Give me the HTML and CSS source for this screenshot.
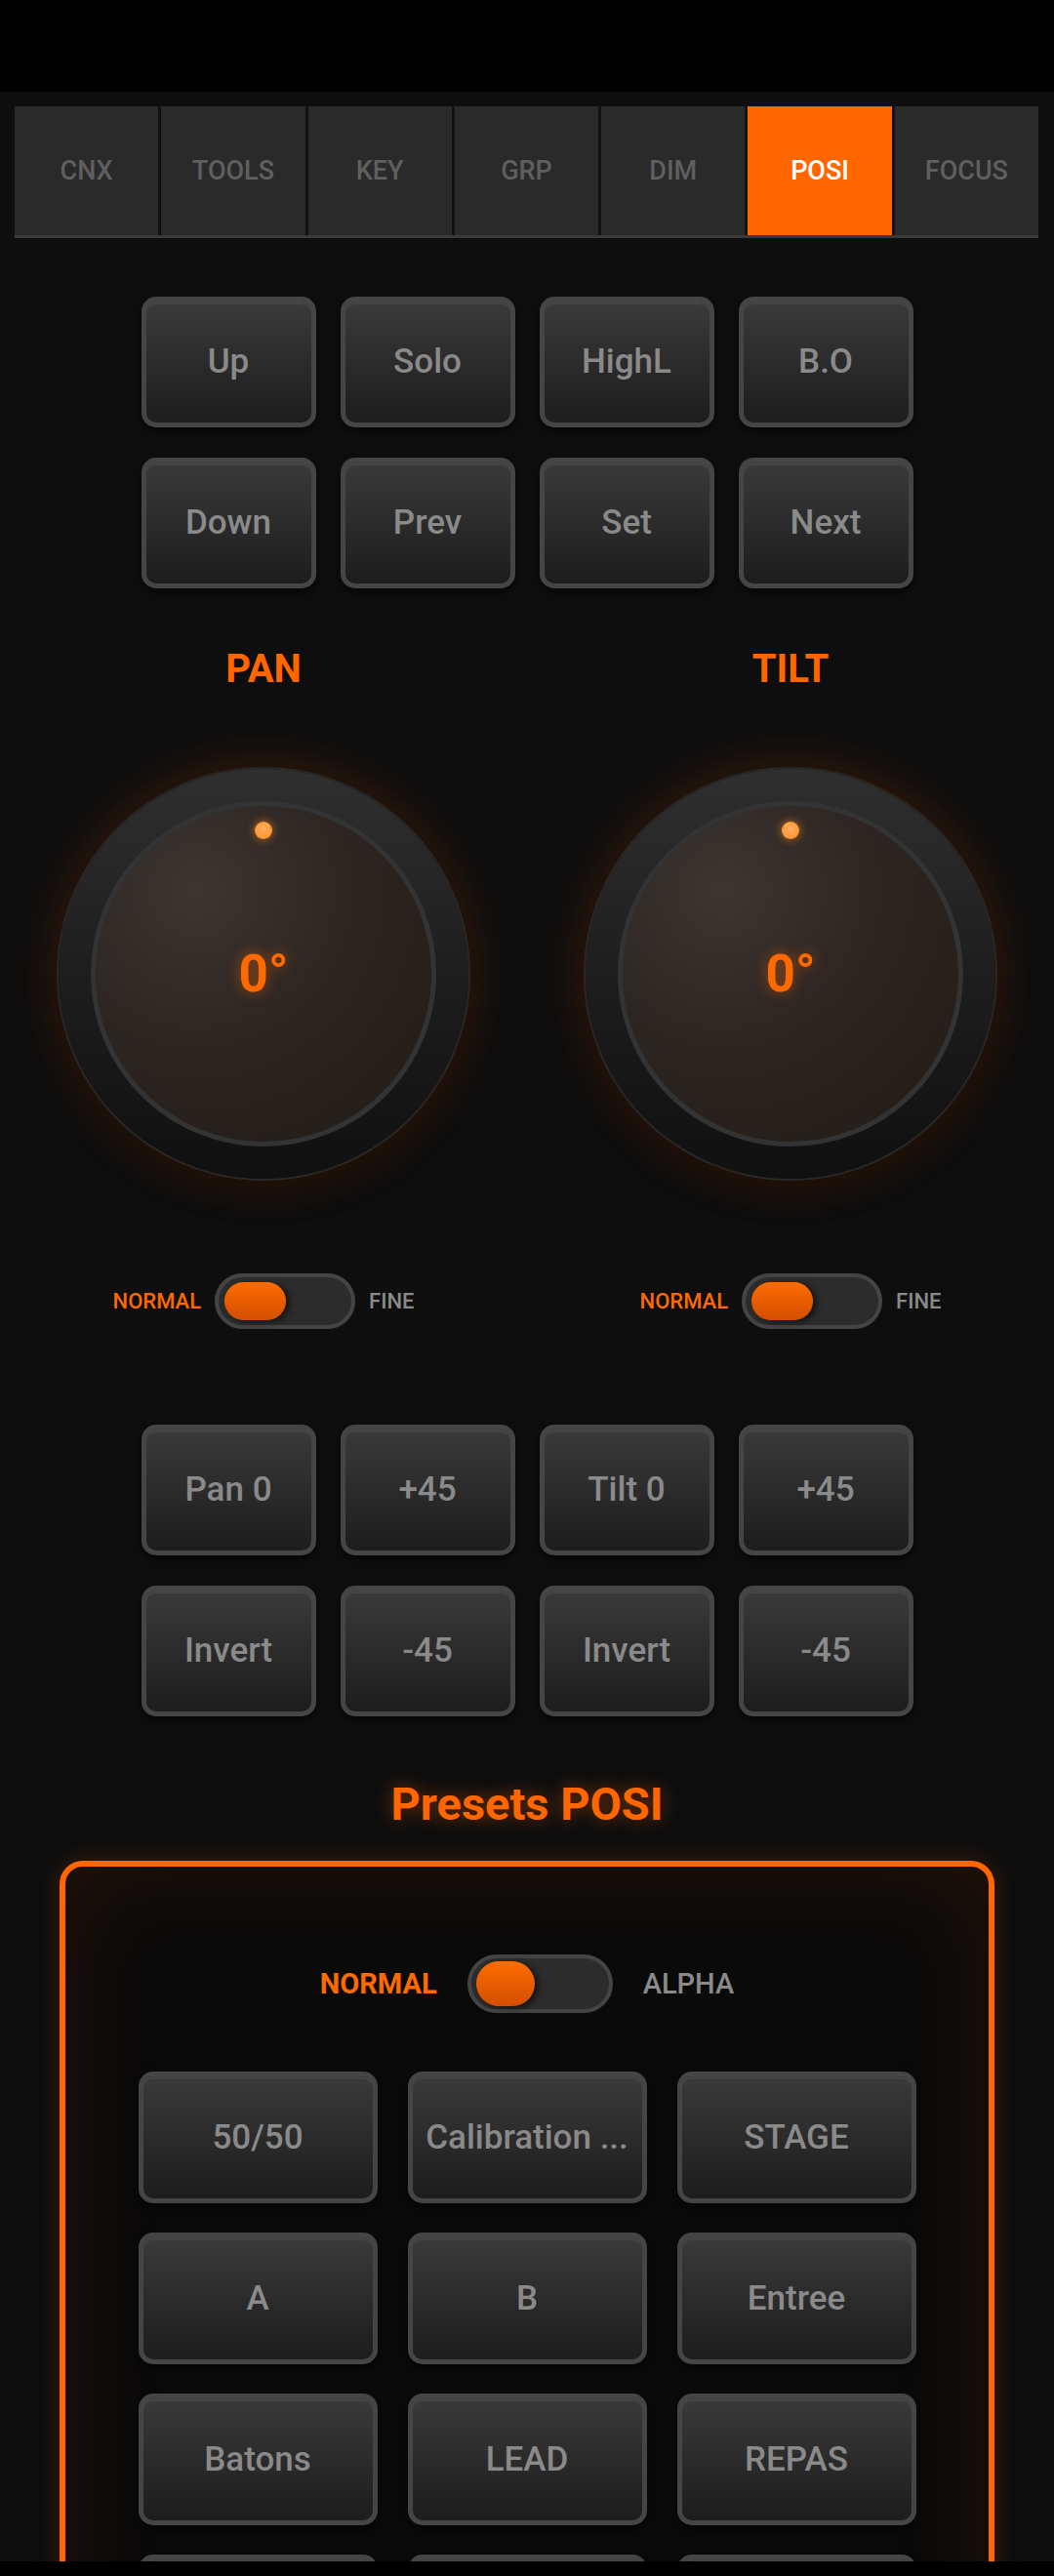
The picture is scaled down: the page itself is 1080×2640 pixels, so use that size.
FILE: index.html
```html
<!DOCTYPE html>
<html lang="fr">
<head>
    <meta charset="UTF-8">
    <meta name="viewport" content="width=device-width, initial-scale=1.0">
    <title>POSI</title>
    <link rel="stylesheet" href="styles.css">
</head>
<body>
    <div class="screen">
        <div class="status-bar"></div>

        <main class="content">
            <nav class="tabs">
                <div class="tab">CNX</div>
                <div class="tab">TOOLS</div>
                <div class="tab">KEY</div>
                <div class="tab">GRP</div>
                <div class="tab">DIM</div>
                <div class="tab tab-active">POSI</div>
                <div class="tab">FOCUS</div>
            </nav>

            <div class="pad-grid pad-top">
                <button class="btn">Up</button>
                <button class="btn">Solo</button>
                <button class="btn">HighL</button>
                <button class="btn">B.O</button>
                <button class="btn">Down</button>
                <button class="btn">Prev</button>
                <button class="btn">Set</button>
                <button class="btn">Next</button>
            </div>

            <div class="axes">
                <div class="axis">
                    <div class="axis-label">PAN</div>
                    <div class="knob">
                        <div class="knob-face">
                            <span class="knob-dot"></span>
                            <span class="knob-value">0°</span>
                        </div>
                    </div>
                    <div class="switch-row">
                        <span class="switch-on">NORMAL</span>
                        <span class="switch"><span class="switch-thumb"></span></span>
                        <span class="switch-off">FINE</span>
                    </div>
                </div>
                <div class="axis">
                    <div class="axis-label">TILT</div>
                    <div class="knob">
                        <div class="knob-face">
                            <span class="knob-dot"></span>
                            <span class="knob-value">0°</span>
                        </div>
                    </div>
                    <div class="switch-row">
                        <span class="switch-on">NORMAL</span>
                        <span class="switch"><span class="switch-thumb"></span></span>
                        <span class="switch-off">FINE</span>
                    </div>
                </div>
            </div>

            <div class="pad-grid pad-mid">
                <button class="btn">Pan 0</button>
                <button class="btn">+45</button>
                <button class="btn">Tilt 0</button>
                <button class="btn">+45</button>
                <button class="btn">Invert</button>
                <button class="btn">-45</button>
                <button class="btn">Invert</button>
                <button class="btn">-45</button>
            </div>

            <h2 class="presets-title">Presets POSI</h2>

            <section class="presets-panel">
                <div class="switch-row switch-row-lg">
                    <span class="switch-on">NORMAL</span>
                    <span class="switch switch-lg"><span class="switch-thumb"></span></span>
                    <span class="switch-off">ALPHA</span>
                </div>

                <div class="preset-grid">
                    <button class="btn">50/50</button>
                    <button class="btn">Calibration ...</button>
                    <button class="btn">STAGE</button>
                    <button class="btn">A</button>
                    <button class="btn">B</button>
                    <button class="btn">Entree</button>
                    <button class="btn">Batons</button>
                    <button class="btn">LEAD</button>
                    <button class="btn">REPAS</button>
                    <button class="btn"></button>
                    <button class="btn"></button>
                    <button class="btn"></button>
                </div>
            </section>
        </main>

        <div class="nav-bar"></div>
    </div>
</body>
</html>
```

FILE: styles.css
```css
body {
    margin: 0;
    padding: 0;
    background-color: #0e0e0e;
    font-family: Roboto, 'Noto Sans', sans-serif;
    color: #888;
}

.screen {
    height: 100vh;
    display: flex;
    flex-direction: column;
    overflow: hidden;
}

.status-bar {
    height: 94px;
    flex-shrink: 0;
    background-color: #000;
}

.nav-bar {
    height: 15px;
    flex-shrink: 0;
    background-color: #000;
}

.content {
    flex: 1;
    overflow-y: auto;
    scrollbar-width: none;
    padding-top: 15px;
}

.content::-webkit-scrollbar {
    display: none;
}

/* tabs */
.tabs {
    display: grid;
    grid-template-columns: repeat(7, 1fr);
    gap: 3px;
    margin: 0 16px 0 15px;
    height: 132px;
    border-bottom: 3px solid #3a3a3a;
    background-color: #111;
}

.tab {
    display: flex;
    align-items: center;
    justify-content: center;
    background-color: #2a2a2a;
    color: #5f5f5f;
    font-size: 27px;
    font-weight: 500;
}

.tab-active {
    background-color: #ff6600;
    color: #fff;
}

/* buttons */
.btn {
    box-sizing: border-box;
    display: block;
    padding: 0 4px;
    border: 5px solid #454545;
    border-radius: 15px;
    background: linear-gradient(to bottom, #3a3a3a 0%, #2b2b2b 50%, #1d1d1d 100%);
    box-shadow: inset 0 3px 0 rgba(255, 255, 255, 0.05), 0 4px 10px rgba(0, 0, 0, 0.6);
    color: #8a8a8a;
    font-family: Roboto, 'Noto Sans', sans-serif;
    font-size: 35px;
    font-weight: 500;
    line-height: 124px;
    text-align: center;
    white-space: nowrap;
    overflow: hidden;
    cursor: pointer;
}

.pad-grid {
    display: grid;
    grid-template-columns: repeat(4, 179px);
    grid-auto-rows: 134px;
    column-gap: 25px;
    row-gap: 31px;
    justify-content: center;
}

.pad-top {
    margin-top: 60px;
}

.pad-mid {
    margin-top: 98px;
}

/* pan / tilt */
.axes {
    display: grid;
    grid-template-columns: 1fr 1fr;
    margin-top: 59px;
}

.axis {
    display: flex;
    flex-direction: column;
    align-items: center;
}

.axis-label {
    color: #ff6600;
    font-size: 40px;
    font-weight: 700;
    line-height: 48px;
}

.knob {
    width: 420px;
    height: 420px;
    margin-top: 78px;
    border-radius: 50%;
    background: linear-gradient(to bottom, #2f2f2f 0%, #1c1c1c 55%, #101010 100%);
    box-shadow: 0 0 0 2px #282828, 0 0 50px rgba(255, 102, 0, 0.22), 0 10px 30px rgba(0, 0, 0, 0.6);
    display: flex;
    align-items: center;
    justify-content: center;
}

.knob-face {
    box-sizing: border-box;
    position: relative;
    width: 354px;
    height: 354px;
    border: 5px solid #333;
    border-radius: 50%;
    background: radial-gradient(circle at 30% 25%, #3c3531 0%, #2d2521 45%, #221a15 100%);
    display: flex;
    align-items: center;
    justify-content: center;
}

.knob-dot {
    position: absolute;
    top: 16px;
    left: 50%;
    width: 18px;
    height: 18px;
    margin-left: -9px;
    border-radius: 50%;
    background: radial-gradient(circle at 50% 40%, #ffb060, #ff8a1e);
    box-shadow: 0 0 10px rgba(255, 140, 30, 0.7);
}

.knob-value {
    color: #ff6a00;
    font-size: 53px;
    font-weight: 700;
    text-shadow: 0 0 14px rgba(255, 102, 0, 0.55);
}

/* switches */
.switch-row {
    display: flex;
    align-items: center;
    gap: 14px;
    margin-top: 97px;
    font-size: 22px;
    font-weight: 500;
}

.switch-on {
    color: #ff6a00;
}

.switch-off {
    color: #8a8a8a;
}

.switch {
    box-sizing: border-box;
    display: flex;
    align-items: center;
    width: 144px;
    height: 57px;
    padding-left: 6px;
    border: 4px solid #444;
    border-radius: 30px;
    background-color: #2c2c2c;
}

.switch-thumb {
    width: 63px;
    height: 39px;
    border-radius: 20px;
    background: linear-gradient(to bottom, #ff6c00, #d24e00);
    box-shadow: 4px 2px 6px rgba(0, 0, 0, 0.55);
}

.switch-row-lg {
    justify-content: center;
    gap: 31px;
    margin-top: 0;
    font-size: 29px;
}

.switch-row-lg .switch-on {
    font-weight: 700;
}

.switch-lg {
    width: 149px;
    height: 60px;
    padding-left: 5px;
}

.switch-lg .switch-thumb {
    width: 60px;
    height: 46px;
    border-radius: 24px;
}

/* presets */
.presets-title {
    margin: 62px 0 0;
    text-align: center;
    color: #ff6600;
    font-size: 47px;
    font-weight: 700;
    line-height: 56px;
    text-shadow: 0 0 18px rgba(255, 102, 0, 0.45);
}

.presets-panel {
    margin: 30px 61px 0;
    padding: 90px 0 40px;
    border: 6px solid #ff6600;
    border-radius: 24px;
    background-color: #0a0a0a;
    box-shadow: inset 0 0 110px rgba(255, 102, 0, 0.1), 0 0 24px rgba(255, 102, 0, 0.18);
}

.preset-grid {
    display: grid;
    grid-template-columns: repeat(3, 245px);
    grid-auto-rows: 135px;
    column-gap: 31px;
    row-gap: 30px;
    justify-content: center;
    margin-top: 60px;
}

.preset-grid .btn {
    line-height: 125px;
}
```
